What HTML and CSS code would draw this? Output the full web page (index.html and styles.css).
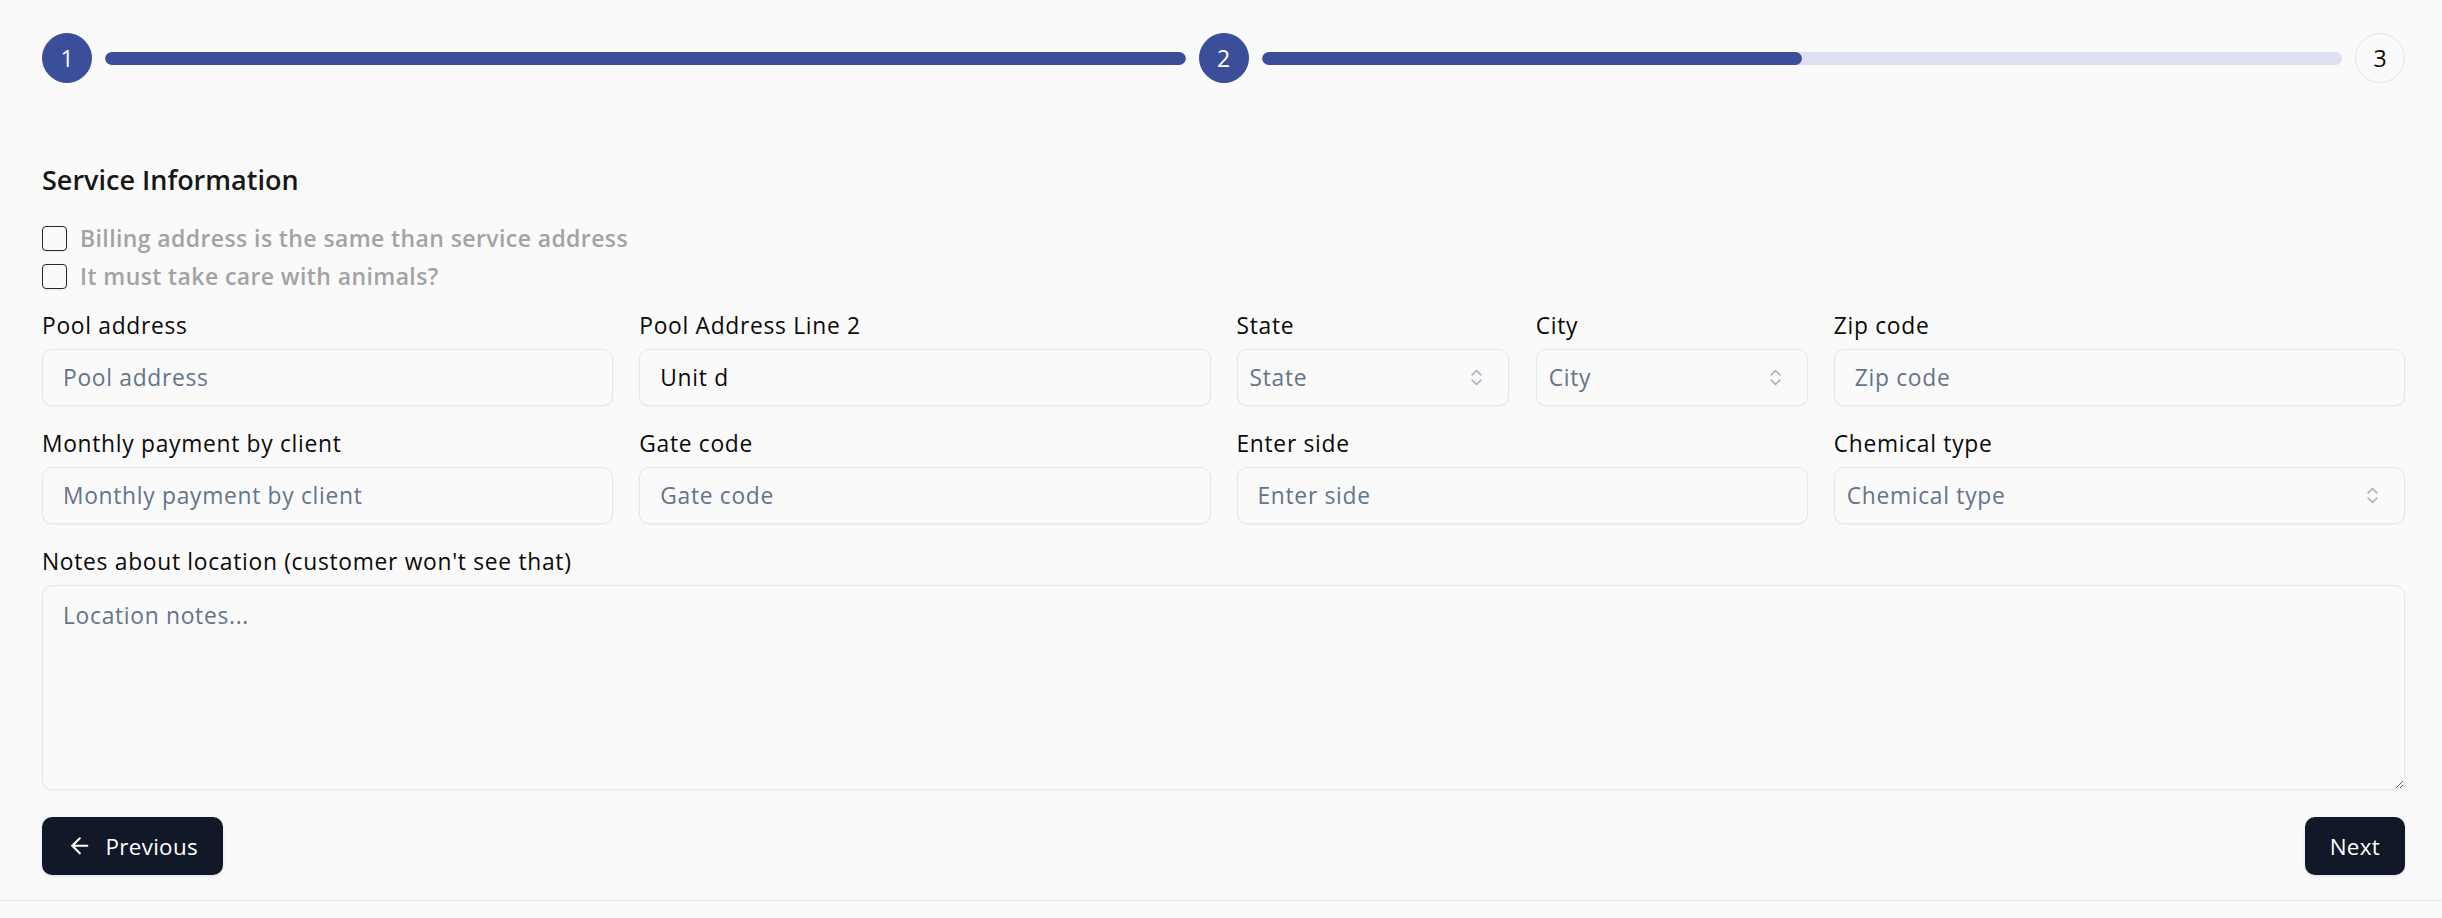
FILE: index.html
```html
<!DOCTYPE html>
<html lang="en">
<head>
<meta charset="utf-8">
<title>Service Information</title>
<link rel="stylesheet" href="styles.css">
</head>
<body>
<div class="page">
  <div class="stepper">
    <div class="step step-active">1</div>
    <div class="track"><div class="fill" style="width:100%"></div></div>
    <div class="step step-active">2</div>
    <div class="track"><div class="fill" style="width:50%"></div></div>
    <div class="step">3</div>
  </div>

  <form class="form">
    <h2 class="title">Service Information</h2>

    <div class="checks">
      <label class="check"><input type="checkbox" class="box"><span>Billing address is the same than service address</span></label>
      <label class="check"><input type="checkbox" class="box"><span>It must take care with animals?</span></label>
    </div>

    <div class="grid">
      <div class="field">
        <label class="label">Pool address</label>
        <input class="input" type="text" placeholder="Pool address">
      </div>
      <div class="field">
        <label class="label">Pool Address Line 2</label>
        <input class="input" type="text" value="Unit d">
      </div>
      <div class="pair">
        <div class="field">
          <label class="label">State</label>
          <div class="select-wrap">
            <select class="select"><option>State</option></select>
            <svg class="chev" viewBox="0 0 24 24" fill="none" stroke="currentColor" stroke-width="1.7" stroke-linecap="round" stroke-linejoin="round"><path d="m7 15 5 5 5-5"/><path d="m7 9 5-5 5 5"/></svg>
          </div>
        </div>
        <div class="field">
          <label class="label">City</label>
          <div class="select-wrap">
            <select class="select"><option>City</option></select>
            <svg class="chev" viewBox="0 0 24 24" fill="none" stroke="currentColor" stroke-width="1.7" stroke-linecap="round" stroke-linejoin="round"><path d="m7 15 5 5 5-5"/><path d="m7 9 5-5 5 5"/></svg>
          </div>
        </div>
      </div>
      <div class="field">
        <label class="label">Zip code</label>
        <input class="input" type="text" placeholder="Zip code">
      </div>

      <div class="field">
        <label class="label">Monthly payment by client</label>
        <input class="input" type="text" placeholder="Monthly payment by client">
      </div>
      <div class="field">
        <label class="label">Gate code</label>
        <input class="input" type="text" placeholder="Gate code">
      </div>
      <div class="field">
        <label class="label">Enter side</label>
        <input class="input" type="text" placeholder="Enter side">
      </div>
      <div class="field">
        <label class="label">Chemical type</label>
        <div class="select-wrap">
          <select class="select"><option>Chemical type</option></select>
          <svg class="chev" viewBox="0 0 24 24" fill="none" stroke="currentColor" stroke-width="1.7" stroke-linecap="round" stroke-linejoin="round"><path d="m7 15 5 5 5-5"/><path d="m7 9 5-5 5 5"/></svg>
        </div>
      </div>
    </div>

    <div class="field notes">
      <label class="label">Notes about location (customer won't see that)</label>
      <textarea class="textarea" placeholder="Location notes..."></textarea>
    </div>

    <div class="actions">
      <button type="button" class="btn">
        <svg class="btn-icon" viewBox="0 0 24 24" fill="none" stroke="currentColor" stroke-width="2" stroke-linecap="round" stroke-linejoin="round"><path d="m12 19-7-7 7-7"/><path d="M19 12H5"/></svg>
        <span>Previous</span>
      </button>
      <button type="button" class="btn">Next</button>
    </div>
  </form>
</div>
</body>
</html>
```

FILE: styles.css
```css
* { box-sizing: border-box; }

html, body {
  margin: 0;
  background: #fafafa;
}

body {
  font-family: "Open Sans", "Noto Sans", sans-serif;
  color: #0a0a0a;
  min-height: 918px;
}

.page {
  padding: 33px 37px 0 42px;
}

/* Stepper */
.stepper {
  display: flex;
  align-items: center;
  height: 50px;
}

.step {
  flex: 0 0 50px;
  width: 50px;
  height: 50px;
  border-radius: 50%;
  display: flex;
  align-items: center;
  justify-content: center;
  font-size: 23px;
  color: #0a0a0a;
  background: #fafafa;
  border: 1.5px solid #e5e5e5;
}

.step-active {
  background: #3b4e99;
  border-color: #3b4e99;
  color: #ffffff;
}

.track {
  flex: 1 1 auto;
  height: 13px;
  margin: 0 13px;
  border-radius: 7px;
  background: #dde0f3;
  overflow: hidden;
}

.fill {
  height: 100%;
  background: #3b4e99;
  border-radius: 7px;
}

/* Form */
.form {
  margin-top: 78px;
  padding-bottom: 25px;
  border-bottom: 1.5px solid #e5e5e5;
  margin-left: -42px;
  margin-right: -37px;
  padding-left: 42px;
  padding-right: 37px;
}

.title {
  margin: 0;
  font-size: 27px;
  line-height: 38px;
  font-weight: 600;
  color: #171717;
}

.checks {
  margin-top: 20px;
  display: flex;
  flex-direction: column;
}

.check {
  display: flex;
  align-items: center;
  gap: 13px;
  height: 38px;
  font-size: 23px;
  font-weight: 600;
  color: #a3a3a3;
  letter-spacing: 0.4px;
}

.box {
  appearance: none;
  -webkit-appearance: none;
  margin: 0;
  width: 25px;
  height: 25px;
  border: 1.5px solid #1e293b;
  border-radius: 4px;
  background: #fafafa;
  box-shadow: 0 1px 2px rgba(0, 0, 0, 0.08);
}

.grid {
  margin-top: 15px;
  display: grid;
  grid-template-columns: repeat(4, 1fr);
  column-gap: 26px;
  row-gap: 22px;
}

.pair {
  display: grid;
  grid-template-columns: 1fr 1fr;
  column-gap: 27px;
}

.field {
  display: flex;
  flex-direction: column;
  min-width: 0;
}

.label {
  font-size: 22.8px;
  line-height: 32px;
  letter-spacing: 0.7px;
  margin-bottom: 7px;
  color: #0a0a0a;
}

.input,
.select,
.textarea {
  font-family: inherit;
  font-size: 22.8px;
  letter-spacing: 0.7px;
  color: #0a0a0a;
  background: #fafafa;
  border: 1.5px solid #e2e8f0;
  border-radius: 10px;
  box-shadow: 0 1px 2px rgba(0, 0, 0, 0.05);
  outline: none;
  width: 100%;
}

.input {
  height: 57px;
  padding: 0 20px;
}

.input::placeholder,
.textarea::placeholder {
  color: #64748b;
}

.select-wrap {
  position: relative;
}

.select {
  appearance: none;
  -webkit-appearance: none;
  height: 57px;
  padding: 0 40px 0 12px;
  color: #64748b;
}

.chev {
  position: absolute;
  right: 22px;
  top: 18px;
  width: 21px;
  height: 21px;
  color: #64748b;
  opacity: 0.55;
  pointer-events: none;
}

.notes {
  margin-top: 22px;
}

.textarea {
  height: 205px;
  padding: 14px 20px;
  line-height: 32px;
  resize: vertical;
  display: block;
}

.actions {
  margin-top: 27px;
  display: flex;
  justify-content: space-between;
}

.btn {
  display: flex;
  align-items: center;
  gap: 13px;
  height: 58px;
  padding: 0 25px;
  border: none;
  border-radius: 10px;
  background: #111827;
  color: #ffffff;
  font-family: inherit;
  font-size: 22.4px;
  font-weight: 500;
  letter-spacing: 0.3px;
  box-shadow: 0 1px 3px rgba(0, 0, 0, 0.12);
}

.btn-icon {
  width: 25.6px;
  height: 25.6px;
}
```
